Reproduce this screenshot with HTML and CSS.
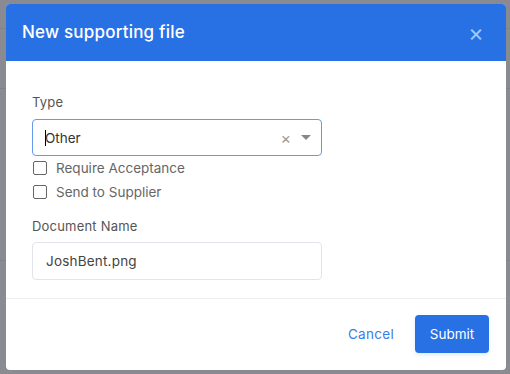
FILE: index.html
```html
<!DOCTYPE html>
<html lang="en">
<head>
    <meta charset="UTF-8">
    <meta name="viewport" content="width=device-width, initial-scale=1.0">
    <title>New supporting file</title>
    <link rel="stylesheet" href="styles.css">
</head>
<body>
    <!-- Page behind the overlay -->
    <div class="backdrop">
        <div class="bg-row"></div>
        <div class="bg-row"></div>
        <div class="bg-row"></div>
    </div>

    <!-- Modal -->
    <div class="modal">
        <div class="modal-header">
            <h2>New supporting file</h2>
            <span class="close">&times;</span>
        </div>

        <form class="modal-body">
            <label class="field-label" for="type">Type</label>
            <div class="select">
                <span class="select-value"><span class="caret-line"></span>Other</span>
                <span class="select-clear">&times;</span>
                <span class="select-arrow"></span>
            </div>

            <label class="check"><span class="box"></span>Require Acceptance</label>
            <label class="check"><span class="box"></span>Send to Supplier</label>

            <label class="field-label doc-label" for="doc_name">Document Name</label>
            <input type="text" id="doc_name" class="text-input" value="JoshBent.png">
        </form>

        <div class="modal-footer">
            <button type="button" class="btn-link">Cancel</button>
            <button type="button" class="btn-primary">Submit</button>
        </div>
    </div>
</body>
</html>
```

FILE: styles.css
```css
body {
    margin: 0;
    padding: 4px 4px 4px 6px;
    width: 510px;
    height: 374px;
    box-sizing: border-box;
    background-color: #8a8b92;
    font-family: Inter, "Liberation Sans", sans-serif;
    position: relative;
    overflow: hidden;
}
.backdrop {
    position: absolute;
    inset: 0;
}
.bg-row {
    height: 1px;
    background-color: #80818a;
    margin-top: 28px;
}
.bg-row:nth-child(2) {
    margin-top: 59px;
}
.bg-row:nth-child(3) {
    margin-top: 171px;
}
.modal {
    position: relative;
    width: 500px;
    height: 366px;
    background-color: #fff;
    border-radius: 4px;
    overflow: hidden;
    display: flex;
    flex-direction: column;
}
.modal-header {
    height: 57px;
    background-color: #2771e4;
    display: flex;
    align-items: center;
    justify-content: space-between;
    padding: 0 22px 0 16px;
}
.modal-header h2 {
    margin: 0 0 1px;
    color: #fff;
    font-size: 17px;
    font-weight: 500;
    letter-spacing: 0.2px;
}
.close {
    color: #a9c6f4;
    font-size: 24px;
    line-height: 1;
}
.modal-body {
    padding: 33px 26px 0;
    height: 204px;
    border-bottom: 1px solid #ececf0;
    display: flex;
    flex-direction: column;
    align-items: flex-start;
}
.field-label {
    font-size: 13px;
    color: #555;
    margin-bottom: 9px;
    letter-spacing: 0.2px;
}
.doc-label {
    margin-top: 14px;
    margin-bottom: 8px;
}
.select {
    width: 290px;
    height: 37px;
    box-sizing: border-box;
    border: 1px solid #6499ef;
    border-radius: 4px;
    display: flex;
    align-items: center;
    padding: 0 10px 0 12px;
}
.select-value {
    flex: 1;
    font-size: 13.5px;
    color: #333;
    display: flex;
    align-items: center;
}
.caret-line {
    width: 1px;
    height: 16px;
    background-color: #000;
    margin-right: -1px;
}
.select-clear {
    color: #999;
    font-size: 16px;
    margin-right: 10px;
}
.select-arrow {
    width: 0;
    height: 0;
    border-left: 5px solid transparent;
    border-right: 5px solid transparent;
    border-top: 5px solid #888;
}
.check {
    display: flex;
    align-items: center;
    font-size: 13.5px;
    color: #666;
    height: 24px;
    margin-left: 1px;
}
.box {
    width: 12px;
    height: 12px;
    border: 1px solid #666;
    border-radius: 2px;
    margin-right: 9px;
}
.text-input {
    width: 290px;
    height: 38px;
    box-sizing: border-box;
    border: 1px solid #e3e3ec;
    border-radius: 4px;
    padding: 0 13px;
    font-family: inherit;
    font-size: 13.5px;
    color: #444;
    letter-spacing: 0.2px;
}
.modal-footer {
    flex: 1;
    display: flex;
    align-items: center;
    justify-content: flex-end;
    padding: 0 17px 2px 0;
    gap: 15px;
}
button {
    font-family: inherit;
    font-size: 13.5px;
    border: none;
    cursor: pointer;
}
.btn-link {
    background: none;
    color: #3a7de6;
    letter-spacing: 0.3px;
}
.btn-primary {
    background-color: #2771e4;
    color: #fff;
    width: 74px;
    height: 38px;
    border-radius: 4px;
    box-shadow: 0 2px 4px rgba(39, 113, 228, 0.15);
}
```
